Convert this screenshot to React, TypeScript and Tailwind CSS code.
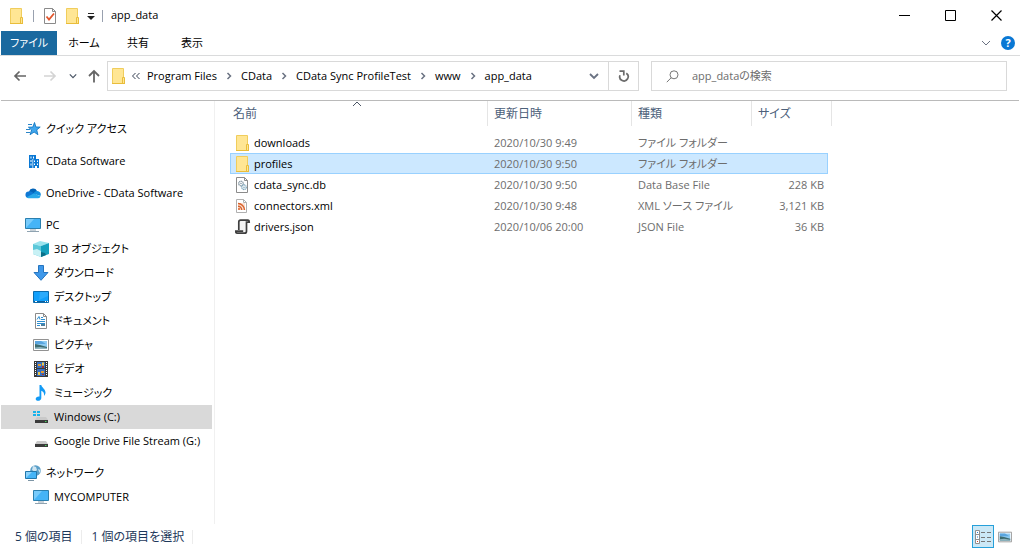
import { useState } from 'react'
import type { ReactNode } from 'react'

type IconProps = { className?: string }

function FolderIcon({ className = 'w-4 h-4 shrink-0' }: IconProps) {
  return (
    <svg viewBox="0 0 16 16" className={className} aria-hidden="true">
      <path d="M1.5 .5h11v15h-11z" fill="#ffe694" stroke="#f0cd5c" />
      <path d="M11.5 9.5h2v6h-2z" fill="#ffe694" stroke="#e9bd3a" />
      <path d="M1 15.5h13" stroke="#e9bd3a" />
    </svg>
  )
}

function CheckDocIcon() {
  return (
    <svg viewBox="0 0 16 16" className="w-4 h-4" fill="none" aria-hidden="true">
      <path d="M2.5 .5h8l3 3v12h-11z" fill="#fff" stroke="#8a8a8a" />
      <path d="M10.5 .5v3h3" stroke="#8a8a8a" />
      <path d="M4.5 8.5l2.5 3 5-6" stroke="#e2562d" strokeWidth="1.8" />
    </svg>
  )
}

function StarIcon() {
  return (
    <svg viewBox="0 0 16 16" className="w-4 h-4 shrink-0" aria-hidden="true">
      <path d="M9.500 1.500l1.400 4.500 4.300.1-3.500 2.800 1.200 4.800-3.800-2.700-4 2.700 1.500-4.700-3.200-2.800 4.400-.1z" fill="#41a7ee" stroke="#1277c2" strokeWidth=".9" />
      <path d="M3 3.500h4M1 8.500h4M1 11.500h4" stroke="#1277c2" strokeWidth=".9" />
    </svg>
  )
}

function BuildingIcon() {
  return (
    <svg viewBox="0 0 16 16" className="w-4 h-4 shrink-0" aria-hidden="true">
      <path d="M4 2h7v4h3v9H4z" fill="#0a78d4" />
      <path d="M5.500 3.500h1v2h-1zM8 3.500h1v2H8zM5.500 7h1v2h-1zM5.500 10.500h1v2h-1zM9 7.500h1v1.500H9zM12 7.500h1v1.500h-1zM9 10.500h1V12H9zM12 10.500h1V12h-1zM7.500 6h.7v9h-.7zM10 13h2v2h-2z" fill="#fff" />
    </svg>
  )
}

function CloudIcon() {
  return (
    <svg viewBox="0 0 16 16" className="w-4 h-4 shrink-0" aria-hidden="true">
      <path d="M4 6.500a4.300 4.300 0 0 1 8-.6l-3 4z" fill="#0364b8" />
      <path d="M3.500 6.500a4 4 0 0 1 3.500.6l5 3-9 2.900a3.300 3.300 0 0 1 .5-6.500z" fill="#0f78d4" />
      <path d="M12 5.900a3.600 3.600 0 0 1 3.400 5.200l-7-2.700c1-1.600 2-2.500 3.600-2.500z" fill="#1490df" />
      <path d="M1.500 12.300l7.200-3.900 6.800 2.900a2.600 2.600 0 0 1-2.300 2H3.500a3 3 0 0 1-2-1z" fill="#28a8ea" />
    </svg>
  )
}

function MonitorIcon() {
  return (
    <svg viewBox="0 0 16 16" className="w-4 h-4 shrink-0" aria-hidden="true">
      <path d="M.5 1.500h15v10H.5z" fill="#45b4f7" stroke="#2b7fae" />
      <path d="M1 11V2h8z" fill="#78cbfb" />
      <path d="M5 13h6M2 14.500h12" stroke="#8fa3b1" />
    </svg>
  )
}

function CubeIcon() {
  return (
    <svg viewBox="0 0 16 16" className="w-4 h-4 shrink-0" aria-hidden="true">
      <path d="M0 3l7-3 9 2-8 3z" fill="#9be4ee" />
      <path d="M0 3l8 2v11l-8-3z" fill="#5cc8d9" />
      <path d="M8 5l8-3v11l-8 3z" fill="#15a0bd" />
      <path d="M0 9l4-1 4 2v6l-8-3z" fill="#c8f1f5" />
      <path d="M8 11l4 1 1 2-5 2z" fill="#0b6f88" />
    </svg>
  )
}

function DownloadIcon() {
  return (
    <svg viewBox="0 0 16 16" className="w-4 h-4 shrink-0" aria-hidden="true">
      <path d="M5.500 .5h5v7h4.500L8 15.300 1 7.500h4.500z" fill="#3e98ea" stroke="#2574bf" />
    </svg>
  )
}

function DesktopIcon() {
  return (
    <svg viewBox="0 0 16 16" className="w-4 h-4 shrink-0" aria-hidden="true">
      <path d="M.5 2.500h15v11H.5z" fill="#12a0fb" stroke="#0b6cae" />
      <path d="M7 3h8v4l-9 4z" fill="#45b6fc" opacity=".5" />
      <path d="M1 12.500h14" stroke="#0b5e9c" />
      <path d="M2 12.500h2M12 12.500h1M14 12.500h1" stroke="#fff" />
    </svg>
  )
}

function DocumentIcon() {
  return (
    <svg viewBox="0 0 16 16" className="w-4 h-4 shrink-0" fill="none" aria-hidden="true">
      <path d="M2.500 .5h8l3 3v12h-11z" fill="#fff" stroke="#8b8b8b" />
      <path d="M10.500 .5v3h3" stroke="#8b8b8b" />
      <path d="M4 6.500l2-3 1 3M8 4.500h2M8 6.500h4M4 8.500h8M4 10.500h8M4 12.500h3" stroke="#2f8fd0" />
      <path d="M8 11h4v2H8z" fill="#4b7f9f" />
    </svg>
  )
}

function PictureIcon({ className = 'w-4 h-4 shrink-0' }: IconProps) {
  return (
    <svg viewBox="0 0 16 16" className={className} aria-hidden="true">
      <path d="M.5 2.500h15v11H.5z" fill="#fff" stroke="#929292" />
      <path d="M2 4h12v8H2z" fill="#8ecbf2" />
      <path d="M2 4h6l5 3H2z" fill="#5aa5df" />
      <path d="M2 7l5 1 7 2v2H2z" fill="#3d6c70" />
      <path d="M2 10.500l5-.5 7 1v1H2z" fill="#8fb5c0" />
    </svg>
  )
}

function VideoIcon() {
  return (
    <svg viewBox="0 0 16 16" className="w-4 h-4 shrink-0" aria-hidden="true">
      <path d="M1 0h14v16H1z" fill="#3a3a3a" />
      <path d="M4 1h8v6H4zM4 8h8v7H4z" fill="#386fc0" />
      <path d="M5 3h3v2H5zM8 10h3v2H8z" fill="#e59a2c" />
      <path d="M9 1.500h2v3H9zM5 11h2v3H5z" fill="#efc94c" />
      <path d="M9 5h2v2H9zM9 13h2v1H9z" fill="#a8332a" />
      <path d="M2.500 1v14M13.500 1v14" stroke="#fff" strokeDasharray="1 1" />
    </svg>
  )
}

function MusicIcon() {
  return (
    <svg viewBox="0 0 16 16" className="w-4 h-4 shrink-0" aria-hidden="true">
      <path d="M6.500 0h1.800c.4 2.600 4.200 4 4.200 7.500 0 1.300-.6 2.500-1.500 3.300.5-2.800-.7-4.300-2.700-5.100v7.200c0 1.700-1.500 2.900-3.300 2.900-1.400 0-2.300-.7-2.300-1.800 0-1.600 1.700-2.700 3.800-2.400z" fill="#129af5" />
    </svg>
  )
}

function DriveIcon({ windows = false }: { windows?: boolean }) {
  return (
    <svg viewBox="0 0 16 16" className="w-4 h-4 shrink-0" aria-hidden="true">
      <path d="M4 8h9l2 3H2z" fill="#c9c9c9" />
      <path d="M2 11h13v3H2z" fill="#3b3b3b" />
      <path d="M12 12h1.500v1H12z" fill="#45d45c" />
      {windows && (
        <>
          <path d="M0 2h7v6H0z" fill="#d9d9d9" />
          <path d="M0 2h3v2H0zM4 2h3v2H4zM0 5h3v2H0zM4 5h3v2H4z" fill="#17b2ea" />
        </>
      )}
    </svg>
  )
}

function NetworkIcon() {
  return (
    <svg viewBox="0 0 16 16" className="w-4 h-4 shrink-0" aria-hidden="true">
      <circle cx="10.500" cy="5.500" r="5.300" fill="#5b9fc8" />
      <path d="M8 1l3 1 1 3-2 2-3-2zM13 4l2.500 1-1 3z" fill="#cfe5f1" />
      <path d="M.5 6.500h11v7H.5z" fill="#45b4f7" stroke="#2377ab" />
      <path d="M1 13V7h6z" fill="#8bd2fb" />
      <path d="M3 15.500h6" stroke="#7d95a5" />
    </svg>
  )
}

function DatabaseFileIcon() {
  return (
    <svg viewBox="0 0 16 16" className="w-4 h-4 shrink-0" fill="none" aria-hidden="true">
      <path d="M1.500 .5h8l3 3v12h-11z" fill="#fff" stroke="#8b8b8b" />
      <path d="M9.500 .5v3h3" stroke="#8b8b8b" />
      <circle cx="6" cy="6.500" r="2.300" stroke="#8799a5" strokeWidth="1.300" strokeDasharray="1.2 .4" />
      <circle cx="6" cy="6.500" r=".8" fill="#8799a5" />
      <circle cx="9" cy="10.200" r="2.300" stroke="#7fa8bd" strokeWidth="1.300" strokeDasharray="1.2 .4" />
      <circle cx="9" cy="10.200" r=".8" fill="#7fa8bd" />
    </svg>
  )
}

function XmlFileIcon() {
  return (
    <svg viewBox="0 0 16 16" className="w-4 h-4 shrink-0" fill="none" aria-hidden="true">
      <path d="M1.500 1.500h7l3 3v10h-10z" fill="#fff" stroke="#b0b0b0" />
      <path d="M8.500 1.500v3h3" stroke="#b0b0b0" />
      <path d="M3 5h7v7H3z" fill="#fbe3d6" />
      <path d="M3 5.500c3.500 0 6.500 3 6.500 6.500M3 8.300c2 0 3.700 1.700 3.700 3.700" stroke="#d9622b" strokeWidth="1.500" />
      <circle cx="4" cy="11" r="1" fill="#d9622b" />
    </svg>
  )
}

function ScrollFileIcon() {
  return (
    <svg viewBox="0 0 16 16" className="w-4 h-4 shrink-0" fill="none" aria-hidden="true">
      <path d="M4.500 1.500h7v11h-7z" fill="#f3f3f3" />
      <path d="M3.800 11V3c0-1.200.7-1.800 1.800-1.800h7.200c1 0 1.400.8 1.400 2h-2.700v9c0 1.300-.8 2-2 2H2.500c-1.200 0-1.800-.8-1.800-2h7.500" stroke="#3f3f3f" strokeWidth="1.700" />
    </svg>
  )
}

function Chevron({ d, className }: { d: string; className: string }) {
  return (
    <svg viewBox="0 0 10 10" className={className} fill="none" stroke="currentColor" aria-hidden="true">
      <path d={d} />
    </svg>
  )
}

const DOWN = 'M1 3l4 4 4-4'
const RIGHT = 'M3.500 2l3 3-3 3'

type NavItem = { id: string; label: string; icon: ReactNode; children?: NavItem[] }

const NAV: NavItem[] = [
  { id: 'quick', label: 'クイック アクセス', icon: <StarIcon /> },
  { id: 'cdata', label: 'CData Software', icon: <BuildingIcon /> },
  { id: 'onedrive', label: 'OneDrive - CData Software', icon: <CloudIcon /> },
  {
    id: 'pc',
    label: 'PC',
    icon: <MonitorIcon />,
    children: [
      { id: '3d', label: '3D オブジェクト', icon: <CubeIcon /> },
      { id: 'downloads', label: 'ダウンロード', icon: <DownloadIcon /> },
      { id: 'desktop', label: 'デスクトップ', icon: <DesktopIcon /> },
      { id: 'documents', label: 'ドキュメント', icon: <DocumentIcon /> },
      { id: 'pictures', label: 'ピクチャ', icon: <PictureIcon /> },
      { id: 'videos', label: 'ビデオ', icon: <VideoIcon /> },
      { id: 'music', label: 'ミュージック', icon: <MusicIcon /> },
      { id: 'c', label: 'Windows (C:)', icon: <DriveIcon windows /> },
      { id: 'g', label: 'Google Drive File Stream (G:)', icon: <DriveIcon /> },
    ],
  },
  {
    id: 'network',
    label: 'ネットワーク',
    icon: <NetworkIcon />,
    children: [{ id: 'mycomputer', label: 'MYCOMPUTER', icon: <MonitorIcon /> }],
  },
]

const FILES = [
  { name: 'downloads', date: '2020/10/30 9:49', type: 'ファイル フォルダー', size: '', icon: <FolderIcon /> },
  { name: 'profiles', date: '2020/10/30 9:50', type: 'ファイル フォルダー', size: '', icon: <FolderIcon /> },
  { name: 'cdata_sync.db', date: '2020/10/30 9:50', type: 'Data Base File', size: '228 KB', icon: <DatabaseFileIcon /> },
  { name: 'connectors.xml', date: '2020/10/30 9:48', type: 'XML ソース ファイル', size: '3,121 KB', icon: <XmlFileIcon /> },
  { name: 'drivers.json', date: '2020/10/06 20:00', type: 'JSON File', size: '36 KB', icon: <ScrollFileIcon /> },
]

const PATH = ['Program Files', 'CData', 'CData Sync ProfileTest', 'www', 'app_data']

function TitleBar() {
  return (
    <header className="flex items-center h-[31px] pl-2 pr-px">
      <FolderIcon className="w-4 h-4 ml-px" />
      <span className="w-px h-3 ml-2 bg-gray-400" />
      <button type="button" aria-label="プロパティ" className="ml-2">
        <CheckDocIcon />
      </button>
      <button type="button" aria-label="新しいフォルダー" className="ml-[7px]">
        <FolderIcon />
      </button>
      <button type="button" aria-label="クイック アクセス ツール バーのカスタマイズ" className="ml-1.5">
        <svg viewBox="0 0 8 8" className="w-2 h-2" aria-hidden="true">
          <path d="M1 1.500h6" stroke="#222" />
          <path d="M0 4h8L4 8z" fill="#222" />
        </svg>
      </button>
      <span className="w-px h-3 ml-[7px] bg-gray-400" />
      <h1 className="ml-2">app_data</h1>
      <div className="flex ml-auto h-full">
        <button type="button" aria-label="最小化" className="w-[46px] flex items-center justify-center">
          <svg viewBox="0 0 11 11" className="w-[11px] h-[11px]" stroke="#000" aria-hidden="true">
            <path d="M0 5.500h11" />
          </svg>
        </button>
        <button type="button" aria-label="最大化" className="w-[46px] flex items-center justify-center">
          <svg viewBox="0 0 11 11" className="w-[11px] h-[11px]" stroke="#000" fill="none" aria-hidden="true">
            <path d="M.5 .5h10v10H.5z" />
          </svg>
        </button>
        <button type="button" aria-label="閉じる" className="w-[46px] flex items-center justify-center">
          <svg viewBox="0 0 11 11" className="w-[11px] h-[11px]" stroke="#000" aria-hidden="true">
            <path d="M.5 .5l10 10M10.500 .5l-10 10" strokeWidth="1.200" />
          </svg>
        </button>
      </div>
    </header>
  )
}

function Ribbon() {
  return (
    <div className="flex items-center h-[25px] border-b border-[#dadbdc] pl-px pr-[5px]">
      <button type="button" className="h-full w-14 bg-[#1a699f] text-white">ファイル</button>
      {['ホーム', '共有', '表示'].map((tab) => (
        <button key={tab} type="button" className="h-full w-[54px]">
          {tab}
        </button>
      ))}
      <button type="button" aria-label="リボンの展開" className="ml-auto text-gray-500">
        <Chevron d={DOWN} className="w-2.5 h-2.5" />
      </button>
      <button
        type="button"
        aria-label="ヘルプ"
        className="ml-2.5 w-3.5 h-3.5 rounded-full bg-[#0a78d4] text-white font-bold leading-[14px]"
      >
        ?
      </button>
    </div>
  )
}

function AddressBar() {
  return (
    <div className="flex items-center h-[45px] border-b border-[#bababa] mx-px pr-3 pb-1">
      <button type="button" aria-label="戻る" className="ml-3">
        <svg viewBox="0 0 14 14" className="w-3.5 h-3.5" fill="none" stroke="#666" strokeWidth="1.700" aria-hidden="true">
          <path d="M13 7H2M6.500 2.500L2 7l4.500 4.500" />
        </svg>
      </button>
      <button type="button" aria-label="進む" className="ml-4">
        <svg viewBox="0 0 14 14" className="w-3.5 h-3.5" fill="none" stroke="#d4d4d4" strokeWidth="1.700" aria-hidden="true">
          <path d="M1 7h11M7.500 2.500L12 7l-4.500 4.500" />
        </svg>
      </button>
      <button type="button" aria-label="最近表示した場所" className="ml-3 text-gray-600">
        <Chevron d={DOWN} className="w-2 h-2 stroke-[1.5]" />
      </button>
      <button type="button" aria-label="上へ" className="ml-2.5 mr-1.5">
        <svg viewBox="0 0 14 14" className="w-3.5 h-3.5" fill="none" stroke="#666" strokeWidth="1.800" aria-hidden="true">
          <path d="M7 13.500V2M2 7l5-5 5 5" />
        </svg>
      </button>
      <div className="flex-1 flex items-center h-[30px] border border-[#d9d9d9] pl-[3px]">
        <FolderIcon />
        <button type="button" aria-label="前の場所" className="ml-1 mr-1.5 text-gray-700">
          <svg viewBox="0 0 10 10" className="w-2.5 h-2.5" fill="none" stroke="currentColor" aria-hidden="true">
            <path d="M4.500 2l-3 3 3 3M8.500 2l-3 3 3 3" />
          </svg>
        </button>
        <nav aria-label="パス" className="flex items-center">
          {PATH.map((part, i) => (
            <span key={part} className="flex items-center">
              {i > 0 && <Chevron d={RIGHT} className="w-2.5 h-2.5 mx-[7px] text-gray-500 stroke-[1.5]" />}
              <a href="#">{part}</a>
            </span>
          ))}
        </nav>
        <button type="button" aria-label="以前の場所" className="ml-auto mr-[9px] text-gray-500">
          <Chevron d={DOWN} className="w-2.5 h-2.5 stroke-[1.8]" />
        </button>
        <button type="button" aria-label="最新の情報に更新" className="flex items-center justify-center w-[30px] h-full border-l border-[#d9d9d9]">
          <svg viewBox="0 0 12 12" className="w-3 h-3" fill="none" stroke="#6b6b6b" strokeWidth="1.700" aria-hidden="true">
            <path d="M8.300 3.200a4.200 4.200 0 1 1-6.300 2" />
            <path d="M1.500 1.200h4.300v4.300" />
          </svg>
        </button>
      </div>
      <label className="flex items-center w-[356px] h-[30px] ml-3 border border-[#d9d9d9] pl-3.5">
        <svg viewBox="0 0 13 13" className="w-[13px] h-[13px]" fill="none" stroke="#777" aria-hidden="true">
          <circle cx="8" cy="4.800" r="4" />
          <path d="M5.200 7.700L.8 12.200" />
        </svg>
        <input
          type="search"
          aria-label="app_dataの検索"
          placeholder="app_dataの検索"
          className="flex-1 min-w-0 ml-[13px] outline-none placeholder:text-[#6d6d6d]"
        />
      </label>
    </div>
  )
}

function NavRow({ item, child = false, selected, onSelect }: {
  item: NavItem
  child?: boolean
  selected: string
  onSelect: (id: string) => void
}) {
  return (
    <button
      type="button"
      onClick={() => onSelect(item.id)}
      className={`flex items-center gap-[5px] w-full h-6 whitespace-nowrap ${child ? 'pl-8' : 'pl-6'} ${
        selected === item.id ? 'bg-[#d9d9d9]' : ''
      }`}
    >
      {item.icon}
      {item.label}
    </button>
  )
}

function Sidebar() {
  const [selected, setSelected] = useState('c')

  return (
    <nav aria-label="ナビゲーション" className="w-[215px] shrink-0 border-r border-[#f0f0f0] pl-px pr-0.5 pt-4">
      <ul className="space-y-2">
        {NAV.map((item) => (
          <li key={item.id}>
            <NavRow item={item} selected={selected} onSelect={setSelected} />
            {item.children && (
              <ul>
                {item.children.map((c) => (
                  <li key={c.id}>
                    <NavRow item={c} child selected={selected} onSelect={setSelected} />
                  </li>
                ))}
              </ul>
            )}
          </li>
        ))}
      </ul>
    </nav>
  )
}

function FileList() {
  const [selected, setSelected] = useState('profiles')

  return (
    <main className="flex-1 min-w-0 pl-[15px]">
      <table className="table-fixed border-separate border-spacing-0 w-[602px] text-left">
        <colgroup>
          <col className="w-[258px]" />
          <col className="w-[144px]" />
          <col className="w-[120px]" />
          <col className="w-[76px]" />
          <col className="w-1" />
        </colgroup>
        <thead className="text-xs text-[#4c607a]">
          <tr className="h-[25px]">
            <th className="relative font-normal p-0 pl-[3px] border-r border-[#e5e5e5]">
              名前
              <Chevron d="M1 7l4-4 4 4" className="absolute top-[-2px] left-[122px] w-2.5 h-2.5 text-gray-600" />
            </th>
            <th className="font-normal p-0 pl-1.5 border-r border-[#e5e5e5]">更新日時</th>
            <th className="font-normal p-0 pl-1.5 border-r border-[#e5e5e5]">種類</th>
            <th colSpan={2} className="font-normal p-0 pl-1.5 border-r border-[#e5e5e5]">サイズ</th>
          </tr>
        </thead>
        <tbody className="text-[#6d6d6d] before:block before:h-1.5 before:content-['']">
          {FILES.map((file) => {
            const active = file.name === selected
            const cell = active ? 'bg-[#cce8ff] border-[#99d1ff]' : 'border-transparent'
            return (
              <tr key={file.name} className="h-[21px] leading-[19px]" onClick={() => setSelected(file.name)}>
                <td className={`p-0 pl-1 border-y border-l ${cell}`}>
                  <div className="flex items-center gap-[3px] h-[19px] text-black">
                    {file.icon}
                    {file.name}
                  </div>
                </td>
                <td className={`p-0 pl-1.5 border-y ${cell}`}>{file.date}</td>
                <td className={`p-0 pl-1.5 border-y ${cell}`}>{file.type}</td>
                <td className={`p-0 pr-[3px] border-y border-r text-right ${cell}`}>{file.size}</td>
              </tr>
            )
          })}
        </tbody>
      </table>
    </main>
  )
}

function StatusBar() {
  return (
    <footer className="flex items-center h-[25px] pl-[15px] pr-2 text-xs text-[#1e395b]">
      <span>5 個の項目</span>
      <span className="w-px h-3.5 ml-2 mr-2.5 bg-[#ececec]" />
      <span>1 個の項目を選択</span>
      <span className="w-px h-3.5 ml-2 mr-2.5 bg-[#ececec]" />
      <div className="flex items-center ml-auto gap-1">
        <button
          type="button"
          aria-label="詳細"
          className="flex items-center justify-center w-[22px] h-[23px] border border-[#26a0da] bg-[#cbe8f6]"
        >
          <svg viewBox="0 0 16 14" className="w-4 h-3.5" fill="none" aria-hidden="true">
            <path d="M.5 .5h4v13h-4zM.5 4.500h4M.5 9.500h4" fill="#fff" stroke="#8f8f8f" />
            <path d="M2 2h1v1H2zM2 6.500h1v1H2z" fill="#2b7fd0" />
            <path d="M2 11h1v1H2z" fill="#d8442a" />
            <path d="M6 2.500h4M12 2.500h4M6 7.500h4M12 7.500h4M6 11.500h4M12 11.500h4" stroke="#777" />
          </svg>
        </button>
        <button type="button" aria-label="大アイコン">
          <PictureIcon className="w-3.5 h-3.5" />
        </button>
      </div>
    </footer>
  )
}

function App() {
  return (
    <div className="flex flex-col min-h-screen bg-white text-black text-[11px] font-['Open_Sans','Noto_Sans_CJK_JP',sans-serif] [font-feature-settings:'palt']">
      <TitleBar />
      <Ribbon />
      <AddressBar />
      <div className="flex flex-1">
        <Sidebar />
        <FileList />
      </div>
      <StatusBar />
    </div>
  )
}

export default App
